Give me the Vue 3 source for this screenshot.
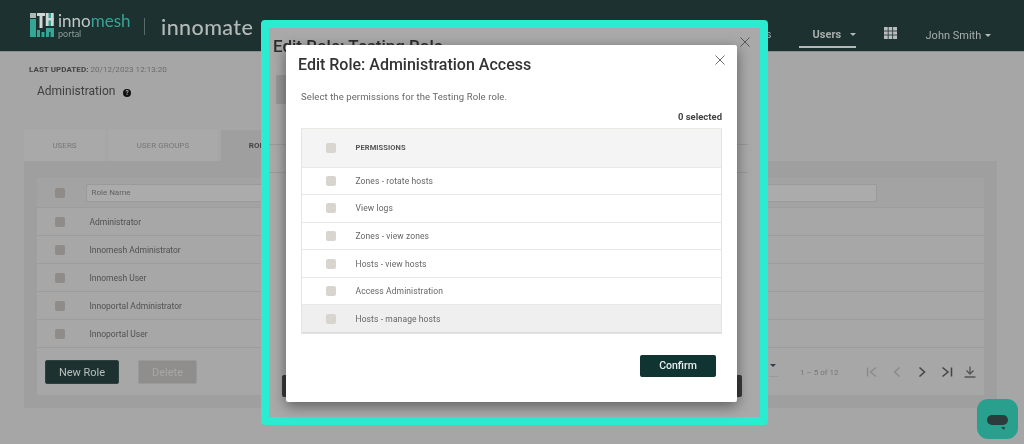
<template>
  <div class="screen">
    <header class="topbar">
      <div class="brand">
        <svg class="logo" viewBox="0 0 24 24" width="24" height="24">
          <rect x="0" y="6" width="6" height="18" fill="#35a595" />
          <rect x="0" y="0" width="6" height="5" fill="#a9b9b5" />
          <rect x="7" y="0" width="8" height="3" fill="#cfd8d5" />
          <rect x="9.500" y="3" width="3" height="12" fill="#cfd8d5" />
          <rect x="7" y="17" width="3" height="7" fill="#35a595" />
          <rect x="11.500" y="19" width="3" height="5" fill="#35a595" />
          <rect x="15.500" y="0" width="8.500" height="13" fill="#35a595" />
          <rect x="16" y="0" width="2.500" height="13" fill="#cfd8d5" />
          <rect x="21" y="0" width="2.500" height="13" fill="#cfd8d5" />
          <rect x="16" y="5" width="7.500" height="2.500" fill="#cfd8d5" />
          <rect x="16" y="15" width="8" height="9" fill="#35a595" />
          <rect x="19" y="19" width="1.500" height="5" fill="#1c3130" />
        </svg>
        <div class="brand-text">
          <div class="brand-name">inno<span>mesh</span></div>
          <div class="brand-sub">portal</div>
        </div>
        <div class="brand-rule"></div>
        <div class="brand-product">innomate</div>
      </div>
      <nav class="topnav">
        <a class="nav-link">Hosts</a>
        <a class="nav-link active">Users <i class="caret"></i></a>
        <svg class="apps" viewBox="0 0 13 12" width="13" height="12">
          <path d="M0 0h13v12H0z" fill="#b9bdbc" />
          <path d="M4.200 0v12M8.600 0v12M0 4h13M0 8h13" stroke="#1c3130" stroke-width=".8" />
        </svg>
        <a class="nav-user">John Smith <i class="caret small"></i></a>
      </nav>
    </header>

    <main class="page">
      <div class="updated"><b>LAST UPDATED:</b> 20/12/2023 12:13:20</div>
      <h1 class="page-title">
        Administration
        <svg class="help" viewBox="0 0 8 8" width="8" height="8">
          <circle cx="4" cy="4" r="4" fill="#111" />
          <text x="4" y="6.400" text-anchor="middle" font-size="6.500" font-weight="700" fill="#aaa">?</text>
        </svg>
      </h1>
      <div class="tabs">
        <div v-for="tab in tabs" :key="tab.name" class="tab" :class="{ current: tab.current }" :style="{ width: tab.width + 'px' }">{{ tab.name }}</div>
      </div>
      <section class="panel">
        <div class="panel-inner">
          <div class="role-row filter-row">
            <span class="check"></span>
            <div class="filter">Role Name</div>
          </div>
          <div v-for="role in roles" :key="role" class="role-row">
            <span class="check"></span>
            <span class="role-name">{{ role }}</span>
          </div>
          <div class="panel-foot">
            <button class="btn dark">New Role</button>
            <button class="btn disabled">Delete</button>
            <div class="pager">
              <span class="page-size"><i></i></span>
              <span class="range">1 – 5 of 12</span>
              <svg class="pager-icon" viewBox="0 0 12 12" width="12" height="12"><path d="M1.500 1.500v9M10 1.500 4.500 6l5.500 4.500" fill="none" stroke="#8a8a8a" stroke-width="1.400" /></svg>
              <svg class="pager-icon" viewBox="0 0 12 12" width="12" height="12"><path d="M8.500 1.500 3.500 6l5 4.500" fill="none" stroke="#8a8a8a" stroke-width="1.400" /></svg>
              <svg class="pager-icon" viewBox="0 0 12 12" width="12" height="12"><path d="M3.500 1.500l5 4.500-5 4.500" fill="none" stroke="#444" stroke-width="1.500" /></svg>
              <svg class="pager-icon" viewBox="0 0 12 12" width="12" height="12"><path d="M1.500 1.500 7 6l-5.500 4.500M10.500 1.500v9" fill="none" stroke="#444" stroke-width="1.500" /></svg>
              <svg class="pager-icon" viewBox="0 0 12 12" width="12" height="12"><path d="M6 .5v7.500M2.500 4.500 6 8l3.500-3.500M.5 11h11" fill="none" stroke="#555" stroke-width="1.300" /></svg>
            </div>
          </div>
        </div>
      </section>
    </main>

    <!-- the older dialog, dimmed, with the highlight frame round it -->
    <div class="frame">
      <h2 class="back-title">Edit Role: Testing Role</h2>
      <svg class="back-close" viewBox="0 0 10 10" width="10" height="10"><path d="M.5.5l9 9M9.500.5l-9 9" stroke="#555" stroke-width="1" /></svg>
      <div class="back-stripe"></div>
      <div class="back-line one"></div>
      <div class="back-line two"></div>
      <div class="back-confirm"></div>
    </div>

    <div class="dialog">
      <div class="dialog-head">
        <h2>Edit Role: Administration Access</h2>
        <svg class="close" viewBox="0 0 10 10" width="10" height="10"><path d="M.5.5l9 9M9.500.5l-9 9" stroke="#6f6f6f" stroke-width="1" /></svg>
      </div>
      <p class="intro">Select the permissions for the Testing Role role.</p>
      <div class="count">0 selected</div>
      <div class="perm-table">
        <div class="perm-row perm-head">
          <span class="check light"></span>
          <span>PERMISSIONS</span>
        </div>
        <div v-for="(perm, i) in permissions" :key="perm" class="perm-row" :class="{ hover: i === permissions.length - 1 }">
          <span class="check light"></span>
          <span>{{ perm }}</span>
        </div>
      </div>
      <div class="dialog-foot">
        <button class="confirm">Confirm</button>
      </div>
    </div>

    <div class="chat">
      <svg viewBox="0 0 22 16" width="22" height="16">
        <rect x="0" y="0" width="21" height="10" rx="5" fill="#2c3c3c" />
        <path d="M14 12l4 0-1 3z" fill="#2c3c3c" />
      </svg>
    </div>
  </div>
</template>

<script setup>
const tabs = [
  { name: 'USERS', width: 81 },
  { name: 'USER GROUPS', width: 110 },
  { name: 'ROLES', width: 80, current: true },
]

const roles = [
  'Administrator',
  'Innomesh Administrator',
  'Innomesh User',
  'Innoportal Administrator',
  'Innoportal User',
]

const permissions = [
  'Zones - rotate hosts',
  'View logs',
  'Zones - view zones',
  'Hosts - view hosts',
  'Access Administration',
  'Hosts - manage hosts',
]
</script>

<style>
html,
body {
  margin: 0;
  overflow: hidden;
}
</style>

<style scoped>
.screen {
  position: relative;
  width: 1024px;
  height: 444px;
  overflow: hidden;
  background: #a6a6a7;
  font-family: Roboto, "Liberation Sans", sans-serif;
  filter: blur(0.45px);
}
.topbar {
  height: 51px;
  background: #1c3130;
  border-bottom: 1px solid #8a9291;
  display: flex;
  align-items: flex-start;
  justify-content: space-between;
}
.brand {
  display: flex;
  align-items: flex-start;
  padding: 13px 0 0 30px;
}
.logo {
  display: block;
}
.brand-text {
  margin-left: 4px;
  width: 81px;
}
.brand-name {
  font-family: Lato, sans-serif;
  font-size: 17px;
  line-height: 15px;
  color: #c2c8c6;
}
.brand-name span {
  color: #37a596;
}
.brand-sub {
  font-family: Lato, sans-serif;
  font-size: 9px;
  line-height: 10px;
  margin-top: 1px;
  color: #8d9c99;
}
.brand-rule {
  width: 1px;
  height: 17px;
  margin: 5px 0 0 5px;
  background: #5a6c6a;
}
.brand-product {
  margin-left: 16px;
  font-family: Lato, sans-serif;
  font-size: 21.500px;
  font-weight: 500;
  line-height: 28px;
  letter-spacing: 0.4px;
  color: #b4bab8;
}
.topnav {
  display: flex;
  align-items: flex-start;
  padding-right: 33px;
  font-size: 11px;
  color: #a8aeac;
}
.nav-link {
  display: block;
  height: 29px;
  padding: 28px 14px 0 14px;
  line-height: 13px;
}
.nav-link.active {
  width: 30px;
  padding-right: 13px;
  margin-left: 13px;
  border-bottom: 2px solid #b5b9b8;
  height: 18px;
  font-weight: 700;
  white-space: nowrap;
}
.caret {
  display: inline-block;
  margin-left: 6px;
  vertical-align: 2px;
  border: 3px solid transparent;
  border-top: 3.500px solid #b5b9b8;
  border-bottom: 0;
}
.caret.small {
  margin-left: 1px;
}
.apps {
  margin: 27px 0 0 28px;
}
.nav-user {
  margin: 29px 0 0 29px;
  line-height: 13px;
  white-space: nowrap;
}
.page {
  padding: 13px 27px 0 24px;
}
.updated {
  margin-left: 5px;
  font-size: 8px;
  line-height: 10px;
  letter-spacing: 0.05px;
  color: #6b6b6b;
}
.updated b {
  color: #444;
}
.page-title {
  margin: 4px 0 0 13px;
  font-size: 12px;
  line-height: 24px;
  font-weight: 400;
  color: #3f3f3f;
  display: flex;
  align-items: center;
  gap: 8px;
}
.help {
  margin-top: 3px;
}
.tabs {
  display: flex;
  gap: 3px;
  margin-top: 27px;
}
.tab {
  height: 31px;
  background: #a9a9aa;
  font-size: 8px;
  line-height: 31px;
  text-align: center;
  color: #777;
}
.tab.current {
  background: #9f9f9f;
  color: #444;
  font-weight: 700;
}
.panel {
  background: #9f9f9f;
  padding: 17px 13px 13px 13px;
}
.panel-inner {
  background: #a7a7a7;
  height: 217px;
}
.role-row {
  height: 27px;
  border-bottom: 1px solid #9d9d9d;
  display: flex;
  align-items: center;
  padding-left: 17.500px;
  font-size: 8.500px;
  color: #515151;
}
.filter-row {
  height: 29px;
  background: #a3a3a3;
}
.check {
  flex: none;
  width: 10px;
  height: 10px;
  border-radius: 2px;
  background: #8f8b88;
}
.check.light {
  background: #d8d4ce;
}
.role-name {
  margin-left: 25px;
}
.filter {
  margin-left: 21px;
  width: 784px;
  height: 16px;
  padding-left: 5px;
  border: 1px solid #9a9a9a;
  border-radius: 2px;
  background: #ababab;
  font-size: 8px;
  line-height: 16px;
  color: #626262;
}
.panel-foot {
  display: flex;
  align-items: flex-start;
  padding: 12px 0 0 8px;
}
.btn {
  height: 24px;
  border-radius: 2px;
  font-family: inherit;
  font-size: 11px;
  padding: 0;
}
.btn.dark {
  width: 74px;
  background: #1c3130;
  color: #b9bfbd;
  border: 1px solid #2c4140;
}
.btn.disabled {
  width: 59px;
  margin-left: 19px;
  background: #908d8d;
  color: #a8a6a6;
  border: 1px solid #999;
}
.pager {
  display: flex;
  align-items: center;
  margin-left: auto;
  padding-right: 8px;
  height: 24px;
}
.page-size {
  display: block;
  width: 9px;
  height: 17px;
  margin: -8px 22px 0 0;
  border-bottom: 1px solid #999;
  position: relative;
}
.page-size i {
  position: absolute;
  top: 5px;
  left: 1px;
  border: 3px solid transparent;
  border-top: 3.500px solid #2d3d52;
  border-bottom: 0;
}
.range {
  width: 60px;
  font-size: 8px;
  color: #777;
  white-space: nowrap;
}
.pager-icon {
  margin-left: 13px;
}
.range + .pager-icon {
  margin-left: 6px;
}
.pager-icon:last-child {
  margin-left: 11px;
}
.frame {
  position: absolute;
  left: 261px;
  top: 20px;
  width: 491px;
  height: 389px;
  border: 8px solid #29ecd0;
  border-radius: 4px;
  background: #a9a9a9;
  overflow: hidden;
}
.back-title {
  position: absolute;
  left: 4px;
  top: 8px;
  margin: 0;
  font-size: 17px;
  line-height: 20px;
  font-weight: 500;
  color: #2e2e2e;
  white-space: nowrap;
}
.back-close {
  position: absolute;
  right: 10px;
  top: 9px;
}
.back-stripe {
  position: absolute;
  left: 7px;
  top: 47px;
  width: 20px;
  height: 29px;
  background: #979797;
}
.back-line {
  position: absolute;
  left: 0;
  right: 12px;
  height: 1px;
  background: #9a9a9a;
}
.back-line.one {
  top: 116px;
}
.back-line.two {
  top: 144px;
}
.back-confirm {
  position: absolute;
  left: 13px;
  right: 18px;
  top: 347px;
  height: 22px;
  background: #3a3a38;
  border-radius: 2px;
}
.dialog {
  position: absolute;
  left: 286px;
  top: 45px;
  width: 451px;
  height: 357px;
  background: #fff;
  border-radius: 2px;
  box-shadow: 0 4px 14px rgba(0, 0, 0, 0.45);
  padding: 0 15px;
  box-sizing: border-box;
}
.dialog-head {
  display: flex;
  justify-content: space-between;
  padding: 10px 0 0 0;
  margin-left: -3px;
}
.dialog-head h2 {
  margin: 0;
  font-size: 16px;
  line-height: 20px;
  font-weight: 500;
  color: #333;
}
.close {
  margin: 0 -3px 0 0;
}
.intro {
  margin: 16px 0 0 0;
  font-size: 9.500px;
  line-height: 12px;
  letter-spacing: 0.1px;
  color: #666;
}
.count {
  margin-top: 8px;
  text-align: right;
  font-size: 9.500px;
  line-height: 12px;
  font-weight: 700;
  color: #444;
}
.perm-table {
  margin-top: 5px;
  border: 1px solid #e4e4e4;
  border-top: 1px solid #ece8e4;
}
.perm-row {
  height: 26.600px;
  border-bottom: 1px solid #e8e8e8;
  display: flex;
  align-items: center;
  gap: 19.500px;
  padding-left: 24px;
  font-size: 8.500px;
  letter-spacing: 0.1px;
  color: #666;
}
.perm-row:last-child {
  border-bottom: 1px solid #dcdcdc;
}
.perm-head {
  height: 37.500px;
  background: #f4f4f4;
  font-size: 7.500px;
  font-weight: 700;
  color: #555;
}
.hover {
  background: #efefef;
}
.dialog-foot {
  display: flex;
  justify-content: flex-end;
  padding: 20.500px 6px 0 0;
}
.confirm {
  width: 76px;
  height: 22.500px;
  border: 0;
  border-radius: 2px;
  background: #0f3431;
  color: #e8eeee;
  font-family: inherit;
  font-size: 10.500px;
  font-weight: 500;
  padding: 0;
}
.chat {
  position: absolute;
  left: 977px;
  top: 399px;
  width: 41px;
  height: 40px;
  border-radius: 11px;
  background: #29a08d;
  display: flex;
  align-items: center;
  justify-content: center;
}
.chat svg {
  margin-top: 7px;
}
</style>
